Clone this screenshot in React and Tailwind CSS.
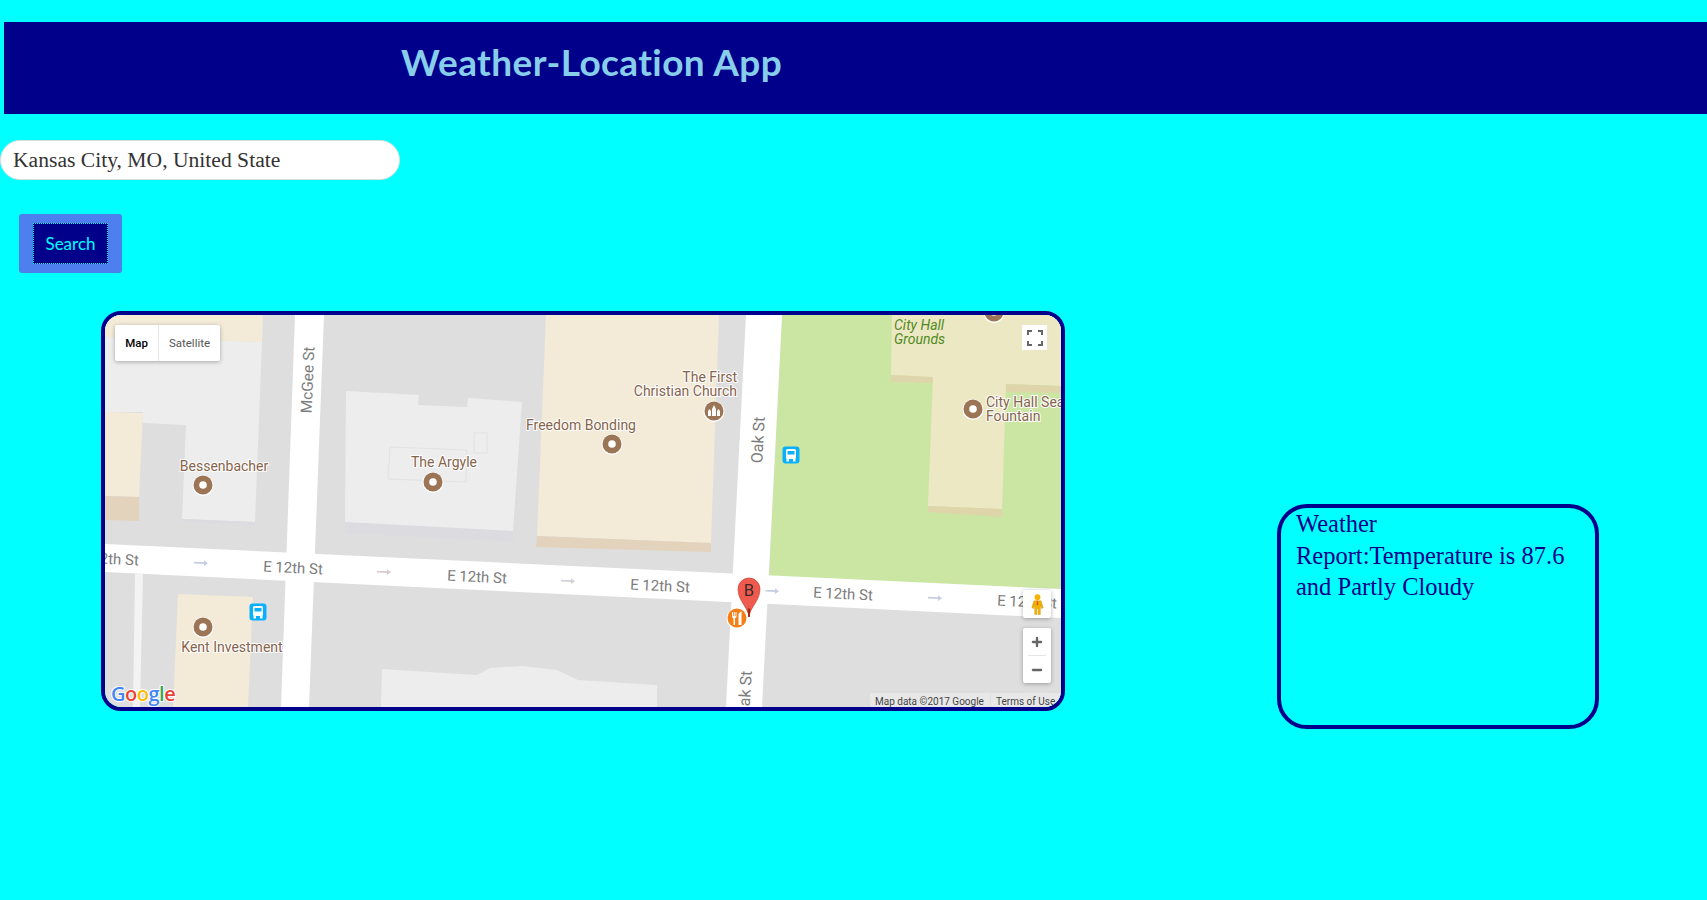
import { Plus, Minus } from 'lucide-react';

// road names, all drawn along the tilt of the street grid
const streetLabels = [
  { text: 'E 12th St', x: 188, y: 253, r: 2.7, size: 'text-[15px]' },
  { text: 'E 12th St', x: 372, y: 262, r: 2.7, size: 'text-[15px]' },
  { text: 'E 12th St', x: 555, y: 271, r: 2.7, size: 'text-[15px]' },
  { text: 'E 12th St', x: 738, y: 279, r: 2.7, size: 'text-[15px]' },
  { text: 'E 12th St', x: 922, y: 287, r: 2.7, size: 'text-[15px]' },
  { text: 'E 12th St', x: 4, y: 244, r: 2.7, size: 'text-[15px]' },
  { text: 'McGee St', x: 203, y: 65, r: -87.5, size: 'text-[15.5px]' },
  { text: 'Oak St', x: 653, y: 125, r: -87, size: 'text-[16px]' },
  { text: 'Oak St', x: 640, y: 379, r: -87, size: 'text-[16px]' },
];

const placeLabels = [
  { text: 'Bessenbacher', x: 119, y: 151, anchor: 'middle' },
  { text: 'The Argyle', x: 339, y: 147, anchor: 'middle' },
  { text: 'Kent Investment', x: 127, y: 332, anchor: 'middle' },
  { text: 'Freedom Bonding', x: 476, y: 110, anchor: 'middle' },
  { text: 'The First', x: 632, y: 62, anchor: 'end' },
  { text: 'Christian Church', x: 632, y: 76, anchor: 'end' },
  { text: 'City Hall Sea', x: 881, y: 87, anchor: 'start' },
  { text: 'Fountain', x: 881, y: 101, anchor: 'start' },
];

const arrows = [
  { x: 96, y: 248, color: '#c6cde2' },
  { x: 279, y: 257, color: '#d8cccc' },
  { x: 463, y: 266, color: '#d2d2d8' },
  { x: 667, y: 276, color: '#c6cde2' },
  { x: 830, y: 283, color: '#c6cde2' },
];

const Poi = ({ x, y, color = '#9c7456', children }) => (
  <g transform={`translate(${x} ${y})`}>
    <circle r="10.5" cy="0.5" fill="#ffffff" />
    <circle r="9.5" fill={color} />
    {children || <circle r="3.8" fill="#ffffff" />}
  </g>
);

const Bus = ({ x, y }) => (
  <g transform={`translate(${x} ${y})`}>
    <rect x="-8.5" y="-8.5" width="17" height="17" rx="3" fill="#0bb0fb" />
    <rect x="-5" y="-6" width="10" height="10" rx="1.5" fill="#ffffff" />
    <rect x="-3.5" y="-4" width="7" height="3.5" fill="#0bb0fb" />
    <rect x="-4.5" y="4" width="2.5" height="2.5" fill="#ffffff" />
    <rect x="2" y="4" width="2.5" height="2.5" fill="#ffffff" />
  </g>
);

const MapDrawing = () => (
  <svg viewBox="0 0 956 392" className="block w-[956px] h-[392px] bg-[#dedede]">
    {/* park and city hall */}
    <polygon points="677,0 956,0 956,274 664,262" fill="#cbe6a3" />
    <polygon
      points="787,0 956,0 956,71 901,69 897,194 823,191 828,62 786,60"
      fill="#ede8c4"
    />
    <polygon points="786,60 828,62 828,68 786,67" fill="#ded5ab" />
    <polygon points="823,191 897,194 897,202 823,197" fill="#ded5ab" />
    <polygon points="901,69 956,71 956,78 901,77" fill="#ded5ab" />

    {/* buildings */}
    <polygon points="441,0 614,0 606,228 432,221" fill="#f3ead8" />
    <polygon points="432,221 606,228 606,237 431,232" fill="#e3d3bd" />

    <polygon points="0,22 157,27 150,207 77,204 81,110 38,108 38,97 0,97" fill="#ededed" />
    <polygon points="0,0 158,0 157,27 0,22" fill="#f3ead8" />
    <polygon points="0,97 38,98 34,182 0,181" fill="#f3ead8" />
    <polygon points="0,181 34,182 34,206 0,205" fill="#e3d3bd" />
    <polygon points="77,204 150,207 150,210 77,207" fill="#dcdce0" />

    <polygon points="240,207 408,216 408,227 240,218" fill="#dcdce0" />
    <polygon
      points="241,76 314,80 313,90 362,92 363,83 417,87 408,216 240,207"
      fill="#ededed"
    />
    <polygon points="285,132 362,135 361,167 283,164" fill="none" stroke="#e2e2e2" />
    <rect x="369" y="118" width="13" height="20" fill="none" stroke="#e2e2e2" />

    <polygon points="73,279 148,282 143,392 68,392" fill="#f3ead8" />
    <polygon
      points="277,354 372,360 385,353 418,351 452,355 473,365 552,370 552,392 276,392"
      fill="#ededed"
    />

    {/* roads */}
    <polygon points="30,259 38,259 35,392 28,392" fill="#f3f3f3" />
    <polygon points="190,0 219,0 204,392 176,392" fill="#ffffff" />
    <polygon points="641,0 677,0 657,392 621,392" fill="#ffffff" />
    <polygon points="0,229 956,274 956,303 0,257" fill="#ffffff" />

    {arrows.map((a) => (
      <g key={a.x} transform={`translate(${a.x} ${a.y}) rotate(2.7)`} fill={a.color}>
        <rect x="-7" y="-0.9" width="11" height="1.8" />
        <path d="M3 -2.8L7 0L3 2.8Z" />
      </g>
    ))}

    {streetLabels.map((l) => (
      <text
        key={`${l.x}-${l.y}`}
        transform={`translate(${l.x} ${l.y}) rotate(${l.r})`}
        textAnchor="middle"
        dominantBaseline="central"
        className={`font-['Roboto',sans-serif] fill-[#7c7c7c] ${l.size}`}
      >
        {l.text}
      </text>
    ))}

    {placeLabels.map((l) => (
      <text
        key={l.text}
        x={l.x}
        y={l.y}
        textAnchor={l.anchor}
        dominantBaseline="central"
        className="font-['Roboto',sans-serif] text-[14px] fill-[#86644b] stroke-white stroke-2 [paint-order:stroke]"
      >
        {l.text}
      </text>
    ))}
    <text x="789" y="10" dominantBaseline="central" className="font-['Roboto',sans-serif] italic text-[14px] fill-[#4f8b1e]">
      City Hall
    </text>
    <text x="789" y="24" dominantBaseline="central" className="font-['Roboto',sans-serif] italic text-[14px] fill-[#4f8b1e]">
      Grounds
    </text>

    <Poi x={889} y={-3} />
    <Poi x={98} y={170} />
    <Poi x={328} y={167} />
    <Poi x={98} y={312} />
    <Poi x={507} y={129} />
    <Poi x={868} y={94} />
    <Poi x={609} y={96}>
      <path d="M-6 5V0L-4.5 -2L-3 0V5ZM-2 5V-2L0 -6L2 -2V5ZM3 5V0L4.5 -2L6 0V5Z" fill="#ffffff" />
    </Poi>
    <Bus x={153} y={297} />
    <Bus x={686} y={140} />

    <Poi x={632} y={303} color="#f57f17">
      <path d="M-5 -6V-1.5C-5 -0.5 -4 0 -3.5 0.2V7H-2V0.2C-1.5 0 -0.5 -0.5 -0.5 -1.5V-6H-1.4V-2H-2.2V-6H-3.2V-2H-4V-6Z" fill="#ffffff" />
      <path d="M1.5 7V-3C1.5 -5 3 -6 4.5 -6.5V7Z" fill="#ffffff" />
    </Poi>

    {/* destination marker */}
    <circle cx="644" cy="275" r="18" fill="#ffffff" opacity="0.35" />
    <path
      d="M644 302C643 292 633 286 633 274A11 11 0 0 1 655 274C655 286 645 292 644 302Z"
      fill="#ef5a4e"
      stroke="#c5372c"
      strokeWidth="0.6"
    />
    <path d="M642.6 293.5H645.4L644.8 302H643.2Z" fill="#a52714" />
    <text x="644" y="275" textAnchor="middle" dominantBaseline="central" className="font-['Roboto',sans-serif] text-[16.5px] fill-[#3a2a2a]">
      B
    </text>

    {/* coloured wordmark */}
    <text x="6" y="378" dominantBaseline="central" className="font-['Open_Sans',sans-serif] font-semibold text-[20px] tracking-[-0.5px] stroke-white stroke-2 [paint-order:stroke]">
      <tspan fill="#4285f4">G</tspan>
      <tspan fill="#ea4335">o</tspan>
      <tspan fill="#fbbc05">o</tspan>
      <tspan fill="#4285f4">g</tspan>
      <tspan fill="#34a853">l</tspan>
      <tspan fill="#ea4335">e</tspan>
    </text>
  </svg>
);

const Pegman = () => (
  <svg viewBox="0 0 16 26" className="w-[13px] h-[21px]">
    <circle cx="8" cy="4" r="3.6" fill="#f5b400" />
    <path d="M3.5 8.5H12.5L15 17L13 18L11.5 13V25.5H8.8V18H7.2V25.5H4.5V13L3 18L1 17Z" fill="#f5b400" stroke="#c98a00" strokeWidth="0.5" />
    <path d="M7.2 8.5H8.8L9 13L8 14.5L7 13Z" fill="#e8541e" />
  </svg>
);

const App = () => {
  return (
    <div className="min-h-screen overflow-hidden bg-[#00ffff] pt-[22px]">
      <header className="ml-[4px] h-[92px] bg-[#00008b] pl-[397px] pt-[16px]">
        <h1 className="font-['Lato',sans-serif] font-bold text-[37px] leading-[48px] tracking-[0.4px] [font-variant-ligatures:none] text-[#87ceeb]">
          Weather-Location App
        </h1>
      </header>

      <input
        type="text"
        readOnly
        value="Kansas City, MO, United State"
        className="block mt-[26px] w-[400px] h-[40px] rounded-[20px] border border-[#dddddd] bg-white pl-[12px] font-['Liberation_Serif',serif] text-[21.6px] text-[#333333] outline-none"
      />

      <div className="mt-[34px] ml-[19px] w-[103px] h-[59px] rounded-[3px] bg-[#4d80ee] p-[9px_14px]">
        <button className="w-full h-full bg-[#00008b] border border-dotted border-[#00ffff] font-['Lato',sans-serif] text-[17px] text-[#00ffff]">
          Search
        </button>
      </div>

      <div className="flex items-start mt-[38px] ml-[101px]">
        <div className="relative w-[964px] h-[400px] shrink-0 overflow-hidden rounded-[20px] border-[4px] border-[#00008b]">
          <MapDrawing />

          <div className="absolute left-[10px] top-[10px] flex h-[36px] w-[105px] rounded-[2px] bg-white shadow-[0_1px_4px_rgba(0,0,0,0.3)] font-['Roboto',sans-serif] text-[11.5px]">
            <span className="flex w-[44px] items-center justify-center border-r border-[#e6e6e6] pt-px font-medium text-black">Map</span>
            <span className="flex flex-1 items-center justify-center pt-px text-[#565656]">Satellite</span>
          </div>

          <div className="absolute left-[917px] top-[10px] flex h-[25px] w-[25px] items-center justify-center bg-white">
            <svg viewBox="0 0 16 16" className="w-[16px] h-[16px]" fill="none" stroke="#666666" strokeWidth="2">
              <path d="M1 5V1H5M11 1H15V5M15 11V15H11M5 15H1V11" />
            </svg>
          </div>

          <div className="absolute left-[918px] top-[275px] flex h-[28px] w-[28px] items-center justify-center rounded-[2px] bg-white shadow-[0_1px_4px_rgba(0,0,0,0.3)]">
            <Pegman />
          </div>

          <div className="absolute left-[918px] top-[313px] flex h-[55px] w-[28px] flex-col items-center rounded-[2px] bg-white shadow-[0_1px_4px_rgba(0,0,0,0.3)] text-[#666666]">
            <span className="flex h-[27px] items-center"><Plus size={14} strokeWidth={4} /></span>
            <span className="h-px w-[18px] bg-[#e6e6e6]"></span>
            <span className="flex h-[27px] items-center"><Minus size={14} strokeWidth={4} /></span>
          </div>

          <div className="absolute left-[765px] bottom-0 flex h-[14px] font-['Roboto',sans-serif] text-[10px] leading-[17px] text-[#444444]">
            <span className="w-[120px] bg-white/30 pl-[5px] whitespace-nowrap">Map data ©2017 Google</span>
            <span className="ml-px w-[70px] bg-white/30 pl-[5px] whitespace-nowrap">Terms of Use</span>
          </div>
        </div>

        <div className="mt-[193px] ml-[212px] w-[322px] h-[225px] shrink-0 rounded-[30px] border-[4px] border-[#00008b] pl-[15px] pr-[24px] font-['Liberation_Serif',serif] text-[24.5px] leading-[31.5px] text-[#00008b]">
          Weather Report:Temperature is 87.6 and Partly Cloudy
        </div>
      </div>
    </div>
  );
};

export default App;
